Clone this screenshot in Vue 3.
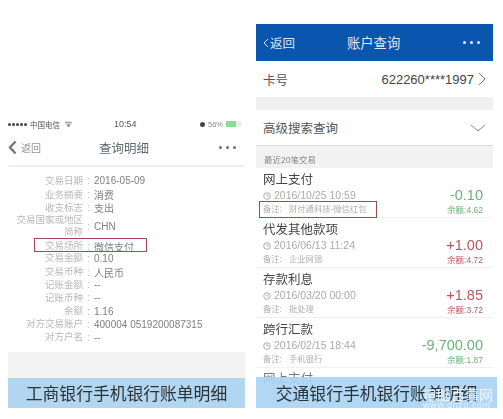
<script setup>
const rows = [
  { label: '交易日期', value: '2016-05-09' },
  { label: '业务摘要', value: '消费' },
  { label: '收支标志', value: '支出' },
  { label: '交易国家或地区简称', value: 'CHN', tall: true },
  { label: '交易场所', value: '微信支付', mark: true },
  { label: '交易金额', value: '0.10' },
  { label: '交易币种', value: '人民币' },
  { label: '记账金额', value: '--' },
  { label: '记账币种', value: '--' },
  { label: '余额', value: '1.16' },
  { label: '对方交易账户', value: '400004 0519200087315' },
  { label: '对方户名', value: '--' },
]
const items = [
  { title: '网上支付', time: '2016/10/25 10:59', note: '财付通科技-微信红包', amount: '-0.10', rest: '余额:4.62', minus: true, mark: true },
  { title: '代发其他款项', time: '2016/06/13 11:24', note: '企业网银', amount: '+1.00', rest: '余额:4.72' },
  { title: '存款利息', time: '2016/03/20 00:00', note: '批处理', amount: '+1.85', rest: '余额:3.72' },
  { title: '跨行汇款', time: '2016/02/15 18:44', note: '手机银行', amount: '-9,700.00', rest: '余额:1.87', minus: true },
]
</script>

<template>
  <div class="page">
    <section class="left">
      <div class="status">
        <span class="dots"><i></i><i></i><i></i><i></i><i></i></span>
        <span class="carrier">中国电信</span>
        <svg class="wifi" width="9" height="7" viewBox="0 0 9 7"><path d="M1 2q3.500-2 7 0M2.500 3.500q2-1 4 0M4.500 6l-1-1.500h2z" fill="none" stroke="#777" stroke-width="0.900"/></svg>
        <span class="clock">10:54</span>
        <span class="battery"><i class="moon"></i>56%<i class="cell"><i class="cell-fill"></i></i></span>
      </div>
      <div class="nav">
        <svg width="9" height="15" viewBox="0 0 9 15"><path d="M7.500 1.500 2 7.500l5.500 6" fill="none" stroke="#6e7c82" stroke-width="2.400"/></svg>
        <span class="back">返回</span>
        <span class="nav-title">查询明细</span>
        <span class="more"><i></i><i></i><i></i></span>
      </div>
      <div class="details">
        <div v-for="r in rows" :key="r.label" class="row" :class="{ tall: r.tall, marked: r.mark }">
          <span class="label">{{ r.label }}</span>
          <span class="colon">:</span>
          <span class="value">{{ r.value }}</span>
        </div>
      </div>
      <div class="spacer"></div>
      <div class="caption">工商银行手机银行账单明细</div>
    </section>

    <section class="right">
      <div class="phone">
        <header class="blue">
          <svg width="6" height="10" viewBox="0 0 6 10"><path d="M5 1 1 5l4 4" fill="none" stroke="#dfe9f5" stroke-width="1"/></svg>
          <span class="blue-back">返回</span>
          <span class="blue-title">账户查询</span>
          <span class="more white"><i></i><i></i><i></i></span>
        </header>
        <div class="line card">
          <span>卡号</span>
          <span class="card-no">622260****1997
            <svg width="8" height="14" viewBox="0 0 8 14"><path d="m1 1 6 6-6 6" fill="none" stroke="#777" stroke-width="1"/></svg>
          </span>
        </div>
        <div class="gap"></div>
        <div class="line search">
          <span>高级搜索查询</span>
          <svg width="16" height="8" viewBox="0 0 16 8"><path d="m1 1 7 6 7-6" fill="none" stroke="#888" stroke-width="1"/></svg>
        </div>
        <div class="recent">最近20笔交易</div>
        <div v-for="t in items" :key="t.title" class="item">
          <div class="item-left">
            <div class="item-title">{{ t.title }}</div>
            <div class="item-time">
              <svg width="8" height="8" viewBox="0 0 8 8"><circle cx="4" cy="4" r="3.300" fill="none" stroke="#999" stroke-width="0.800"/><path d="M4 2v2h2" fill="none" stroke="#999" stroke-width="0.700"/></svg>
              {{ t.time }}
            </div>
            <div class="item-note" :class="{ 'note-mark': t.mark }"><span class="note-key">备注:</span>{{ t.note }}</div>
          </div>
          <div class="item-right" :class="t.minus ? 'green' : 'red'">
            <div class="amount">{{ t.amount }}</div>
            <div class="rest">{{ t.rest }}</div>
          </div>
        </div>
        <div class="item-title cut">网上支付</div>
      </div>
      <div class="caption over">交通银行手机银行账单明细
        <span class="mark-text">电脑百事网</span>
        <span class="mark-url">www.dnzo.com</span>
      </div>
    </section>
  </div>
</template>

<style scoped>
.page {
  width: 503px;
  height: 419px;
  overflow: hidden;
  display: flex;
  background: #fff;
  color: #555;
  font-family: "Liberation Sans", "Noto Sans CJK SC", sans-serif;
}
.left {
  width: 237px;
  margin-left: 8px;
  padding-top: 118px;
  display: flex;
  flex-direction: column;
  height: 408px;
  box-sizing: border-box;
  filter: blur(0.55px);
}
.status {
  height: 12px;
  display: flex;
  align-items: center;
  font-size: 7.500px;
  color: #555;
}
.dots { width: 22px; display: flex; gap: 1px; }
.dots i { width: 3px; height: 3px; border-radius: 50%; background: #444; }
.carrier { width: 34px; white-space: nowrap; }
.clock { margin-left: 41px; font-size: 9px; }
.wifi { flex: none; }
.battery { margin-left: auto; margin-right: 4px; display: flex; align-items: center; gap: 3px; color: #888; }
.moon { width: 5px; height: 5px; border-radius: 50%; background: #444; }
.cell { width: 15px; height: 6px; display: block; background: #e8efe8; }
.cell-fill { display: block; width: 10px; height: 6px; background: #8fdc8f; }
.nav {
  height: 37px;
  display: flex;
  align-items: center;
  position: relative;
  border-bottom: 2px solid #ecf0f1;
  box-sizing: border-box;
}
.back { font-size: 10px; color: #8a979c; margin-left: 4px; }
.nav-title {
  position: absolute;
  left: 91px;
  font-size: 12.500px;
  color: #5f6b71;
}
.more { margin-left: auto; margin-right: 9px; display: flex; gap: 4px; }
.more i { width: 3px; height: 3px; border-radius: 50%; background: #6d7477; }
.details { padding-top: 7px; }
.row {
  height: 13.200px;
  display: grid;
  grid-template-columns: 75px 11px 1fr;
  align-items: center;
  font-size: 10px;
  color: #808080;
  box-sizing: border-box;
}
.row .label { text-align: right; color: #b8b8b8; font-size: 9.500px; line-height: 12px; }
.row .colon { text-align: center; color: #b8b8b8; }
.row.tall { height: 25px; }
.row.marked { position: relative; }
.row.marked::after {
  content: "";
  position: absolute;
  left: 26px;
  top: -1px;
  width: 113px;
  height: 14px;
  box-sizing: border-box;
  border: 1.500px solid #a8474f;
  pointer-events: none;
}
.spacer { flex: 1; background: linear-gradient(#fff 0, #fff 8px, #f3f3f3 8px); min-height: 30px; }
.caption {
  height: 30px;
  flex: none;
  background: #b3d6f0;
  color: #2a3338;
  font-size: 16.800px;
  display: flex;
  align-items: center;
  justify-content: center;
  white-space: nowrap;
}
.right { width: 247px; margin-left: 11px; position: relative; height: 408px; filter: blur(0.55px); }
.phone { width: 237px; height: 408px; overflow: hidden; padding-top: 24px; box-sizing: border-box; }
.blue {
  height: 37px;
  background: #0a55ae;
  color: #dfe9f5;
  display: flex;
  align-items: center;
  position: relative;
  padding-left: 7px;
}
.blue-back { font-size: 12.500px; margin-left: 1px; }
.blue-title { position: absolute; left: 91px; font-size: 13.300px; }
.more.white { margin-right: 13px; }
.more.white i { background: #e8eef6; }
.line {
  display: flex;
  align-items: center;
  justify-content: space-between;
  padding: 0 7px;
  font-size: 12.500px;
  color: #555;
  background: #fff;
  box-sizing: border-box;
}
.card { height: 36px; }
.card-no { display: flex; align-items: center; gap: 4px; font-size: 13px; color: #444; }
.gap { height: 13px; background: #f0f0f0; }
.search { height: 36px; border-bottom: 1px solid #dcdcdc; }
.recent { height: 22px; background: #f2f2f2; font-size: 8.500px; color: #888; padding: 7px 0 0 8px; box-sizing: border-box; }
.item {
  height: 50px;
  display: flex;
  justify-content: space-between;
  border-bottom: 1px solid #f0f0f0;
  padding: 4px 10px 0 7px;
  box-sizing: border-box;
}
.item-title { font-size: 12.500px; line-height: 16px; color: #444; white-space: nowrap; }
.item-time { font-size: 10.500px; line-height: 15px; color: #aaa; display: flex; align-items: center; gap: 3px; white-space: nowrap; }
.item-note { font-size: 8.300px; line-height: 13px; color: #b0b0b0; position: relative; white-space: nowrap; display: flex; }
.note-key { width: 26px; flex: none; }
.note-mark::after {
  content: "";
  position: absolute;
  left: -4px;
  top: -2px;
  width: 118px;
  height: 17px;
  box-sizing: border-box;
  border: 1.500px solid #a8474f;
}
.item-right { text-align: right; padding-top: 15px; }
.amount { font-size: 14.500px; line-height: 17px; white-space: nowrap; }
.rest { font-size: 8.500px; line-height: 13px; white-space: nowrap; }
.green { color: #6db07c; }
.red { color: #b9575e; }
.cut { padding: 3px 0 0 7px; color: #777; }
.over {
  position: absolute;
  left: 0;
  top: 377px;
  width: 241px;
  height: 31px;
  background: rgba(170, 212, 243, 0.92);
  overflow: hidden;
}
.mark-text {
  position: absolute;
  left: 167px;
  top: 7px;
  font-size: 14px;
  color: #f2f7fb;
  opacity: 0.95;
}
.mark-url {
  position: absolute;
  left: 167px;
  top: 23px;
  font-size: 9px;
  letter-spacing: 0.600px;
  color: #e9f3fb;
}
</style>
